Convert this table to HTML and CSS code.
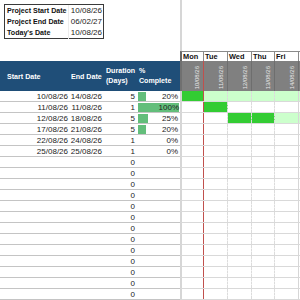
FILE: index.html
```html
<!DOCTYPE html>
<html>
<head>
<meta charset="utf-8">
<link rel="stylesheet" href="styles.css">
</head>
<body>
<div class="sheet">
  <div class="left">
    <div class="top">
      <div class="info">
        <div class="info-row"><span class="lbl">Project Start Date</span><span class="val">10/08/26</span></div>
        <div class="info-row"><span class="lbl">Project End Date</span><span class="val">06/02/27</span></div>
        <div class="info-row"><span class="lbl">Today's Date</span><span class="val">10/08/26</span></div>
      </div>
    </div>
    <div class="thead">
      <div class="th th-start">Start Date</div>
      <div class="th th-end">End Date</div>
      <div class="th th-dur">Duration<br>(Days)</div>
      <div class="th th-pct">%<br>Complete</div>
    </div>
    <div class="trow"><span class="td">10/08/26</span><span class="td">14/08/26</span><span class="td dur">5</span><span class="td pct"><i class="bar" style="width:8px"></i><b>20%</b></span></div>
    <div class="trow"><span class="td">11/08/26</span><span class="td">11/08/26</span><span class="td dur">1</span><span class="td pct"><i class="bar" style="width:41px"></i><b>100%</b></span></div>
    <div class="trow"><span class="td">12/08/26</span><span class="td">18/08/26</span><span class="td dur">5</span><span class="td pct"><i class="bar" style="width:10px"></i><b>25%</b></span></div>
    <div class="trow"><span class="td">17/08/26</span><span class="td">21/08/26</span><span class="td dur">5</span><span class="td pct"><i class="bar" style="width:8px"></i><b>20%</b></span></div>
    <div class="trow"><span class="td">22/08/26</span><span class="td">24/08/26</span><span class="td dur">1</span><span class="td pct"><b>0%</b></span></div>
    <div class="trow"><span class="td">25/08/26</span><span class="td">25/08/26</span><span class="td dur">1</span><span class="td pct"><b>0%</b></span></div>
    <div class="trow"><span class="td"></span><span class="td"></span><span class="td dur">0</span><span class="td pct"></span></div>
    <div class="trow"><span class="td"></span><span class="td"></span><span class="td dur">0</span><span class="td pct"></span></div>
    <div class="trow"><span class="td"></span><span class="td"></span><span class="td dur">0</span><span class="td pct"></span></div>
    <div class="trow"><span class="td"></span><span class="td"></span><span class="td dur">0</span><span class="td pct"></span></div>
    <div class="trow"><span class="td"></span><span class="td"></span><span class="td dur">0</span><span class="td pct"></span></div>
    <div class="trow"><span class="td"></span><span class="td"></span><span class="td dur">0</span><span class="td pct"></span></div>
    <div class="trow"><span class="td"></span><span class="td"></span><span class="td dur">0</span><span class="td pct"></span></div>
    <div class="trow"><span class="td"></span><span class="td"></span><span class="td dur">0</span><span class="td pct"></span></div>
    <div class="trow"><span class="td"></span><span class="td"></span><span class="td dur">0</span><span class="td pct"></span></div>
    <div class="trow"><span class="td"></span><span class="td"></span><span class="td dur">0</span><span class="td pct"></span></div>
    <div class="trow"><span class="td"></span><span class="td"></span><span class="td dur">0</span><span class="td pct"></span></div>
    <div class="trow"><span class="td"></span><span class="td"></span><span class="td dur">0</span><span class="td pct"></span></div>
    <div class="trow"><span class="td"></span><span class="td"></span><span class="td dur">0</span><span class="td pct"></span></div>
  </div>
  <div class="right">
    <div class="r-top"></div>
    <div class="days">
      <div class="day c1">Mon</div><div class="day">Tue</div><div class="day">Wed</div><div class="day">Thu</div><div class="day">Fri</div><div class="day"></div>
    </div>
    <div class="dates">
      <div class="date c1"><span>10/08/26</span></div>
      <div class="date"><span>11/08/26</span></div>
      <div class="date"><span>12/08/26</span></div>
      <div class="date"><span>13/08/26</span></div>
      <div class="date"><span>14/08/26</span></div>
      <div class="date"></div>
    </div>
    <div class="grow"><i class="g c1 done"></i><i class="g c2 plan"></i><i class="g c3 plan"></i><i class="g c4 plan"></i><i class="g c5 plan"></i><i class="g c6 plan"></i></div>
    <div class="grow"><i class="g c1"></i><i class="g c2 done"></i><i class="g c3"></i><i class="g c4"></i><i class="g c5"></i><i class="g c6"></i></div>
    <div class="grow"><i class="g c1"></i><i class="g c2"></i><i class="g c3 done"></i><i class="g c4 done"></i><i class="g c5 plan"></i><i class="g c6 plan"></i></div>
    <div class="grow"><i class="g c1"></i><i class="g c2"></i><i class="g c3"></i><i class="g c4"></i><i class="g c5"></i><i class="g c6"></i></div>
    <div class="grow"><i class="g c1"></i><i class="g c2"></i><i class="g c3"></i><i class="g c4"></i><i class="g c5"></i><i class="g c6"></i></div>
    <div class="grow"><i class="g c1"></i><i class="g c2"></i><i class="g c3"></i><i class="g c4"></i><i class="g c5"></i><i class="g c6"></i></div>
    <div class="grow"><i class="g c1"></i><i class="g c2"></i><i class="g c3"></i><i class="g c4"></i><i class="g c5"></i><i class="g c6"></i></div>
    <div class="grow"><i class="g c1"></i><i class="g c2"></i><i class="g c3"></i><i class="g c4"></i><i class="g c5"></i><i class="g c6"></i></div>
    <div class="grow"><i class="g c1"></i><i class="g c2"></i><i class="g c3"></i><i class="g c4"></i><i class="g c5"></i><i class="g c6"></i></div>
    <div class="grow"><i class="g c1"></i><i class="g c2"></i><i class="g c3"></i><i class="g c4"></i><i class="g c5"></i><i class="g c6"></i></div>
    <div class="grow"><i class="g c1"></i><i class="g c2"></i><i class="g c3"></i><i class="g c4"></i><i class="g c5"></i><i class="g c6"></i></div>
    <div class="grow"><i class="g c1"></i><i class="g c2"></i><i class="g c3"></i><i class="g c4"></i><i class="g c5"></i><i class="g c6"></i></div>
    <div class="grow"><i class="g c1"></i><i class="g c2"></i><i class="g c3"></i><i class="g c4"></i><i class="g c5"></i><i class="g c6"></i></div>
    <div class="grow"><i class="g c1"></i><i class="g c2"></i><i class="g c3"></i><i class="g c4"></i><i class="g c5"></i><i class="g c6"></i></div>
    <div class="grow"><i class="g c1"></i><i class="g c2"></i><i class="g c3"></i><i class="g c4"></i><i class="g c5"></i><i class="g c6"></i></div>
    <div class="grow"><i class="g c1"></i><i class="g c2"></i><i class="g c3"></i><i class="g c4"></i><i class="g c5"></i><i class="g c6"></i></div>
    <div class="grow"><i class="g c1"></i><i class="g c2"></i><i class="g c3"></i><i class="g c4"></i><i class="g c5"></i><i class="g c6"></i></div>
    <div class="grow"><i class="g c1"></i><i class="g c2"></i><i class="g c3"></i><i class="g c4"></i><i class="g c5"></i><i class="g c6"></i></div>
    <div class="grow"><i class="g c1"></i><i class="g c2"></i><i class="g c3"></i><i class="g c4"></i><i class="g c5"></i><i class="g c6"></i></div>
  </div>
</div>
</body>
</html>
```
FILE: styles.css
```css
* { box-sizing: border-box; }
html, body { margin: 0; padding: 0; background: #fff; }
body {
  font-family: "Liberation Sans", Arial, sans-serif;
  color: #222;
  overflow: hidden;
}
.sheet {
  display: flex;
  width: 300px;
  height: 300px;
  overflow: hidden;
}
.left {
  width: 180px;
  flex: none;
  display: flex;
  flex-direction: column;
}
.top {
  height: 61px;
  padding: 4px 0 0 4px;
}
.info {
  width: 100px;
  border: 1px solid #3a3a3a;
  display: flex;
  flex-direction: column;
}
.info-row {
  height: 11px;
  display: grid;
  grid-template-columns: 63px 35px;
  line-height: 12px;
}
.lbl {
  font-weight: bold;
  font-size: 7.1px;
  padding-left: 2px;
  color: #111;
  white-space: nowrap;
}
.val {
  font-size: 8px;
  text-align: right;
  padding-right: 1px;
  border-left: 1px solid #ececec;
}
.thead {
  height: 30px;
  background: #1f4e78;
  display: grid;
  grid-template-columns: 69px 34px 34px 43px;
}
.th {
  color: #fff;
  font-weight: bold;
  font-size: 7.1px;
  line-height: 10px;
  display: flex;
  align-items: center;
  white-space: nowrap;
}
.th-start { padding-left: 7px; padding-top: 1px; }
.th-end { padding-left: 2px; padding-top: 1px; }
.th-dur { padding-left: 3px; }
.th-pct { padding-left: 2px; }
.trow {
  height: 11px;
  flex: none;
  display: grid;
  grid-template-columns: 69px 34px 34px 43px;
  border-bottom: 1px solid #c4c4c4;
}
.td {
  font-size: 8px;
  line-height: 11px;
  text-align: right;
  padding-right: 1px;
  white-space: nowrap;
}
.td.dur { padding-right: 2px; }
.td.pct {
  display: grid;
  padding-right: 2px;
}
.td.pct > * { grid-area: 1 / 1; }
.bar {
  display: block;
  height: 9px;
  margin: 1px 0 0 1px;
  background: #63be7b;
  justify-self: start;
}
.td.pct b {
  font-weight: normal;
  position: relative;
}
.right {
  width: 120px;
  flex: none;
  display: flex;
  flex-direction: column;
}
.r-top {
  height: 51px;
  flex: none;
  border-left: 2px solid #d6d6d6;
}
.days, .dates, .grow {
  display: grid;
  grid-template-columns: 22px 24px 24px 23px 24px 1px;
  flex: none;
}
.days {
  height: 10px;
  border-top: 1px solid #8a8a8a;
  border-left: 2px solid #6a6a6a;
}
.day {
  font-size: 7.4px;
  font-weight: bold;
  line-height: 9px;
  padding-left: 1px;
  color: #111;
  border-right: 1px solid #8a8a8a;
}
.dates {
  height: 30px;
  background: #808080;
  border-left: 2px solid #707070;
}
.date {
  display: flex;
  justify-content: flex-end;
  align-items: flex-end;
  padding: 0 2px 2px 0;
  border-right: 1px solid #6e6e6e;
}
.date.c1 { border-right-color: #c0504d; }
.date span {
  writing-mode: vertical-rl;
  transform: rotate(180deg);
  font-size: 6px;
  line-height: 7px;
  color: #e8e8e8;
  white-space: nowrap;
}
.grow {
  height: 11px;
  border-left: 2px solid #d6d6d6;
  border-bottom: 1px solid #d9d9d9;
}
.g { display: block; }
.g.c1 { border-right: 1px solid #c0504d; }
.g.c2, .g.c3, .g.c4 { border-right: 1px dashed #dcdcdc; }
.g.c5 { border-right: 1px solid #d6d6d6; }
.g.done { background: #33cc33; }
.g.plan { background: #ccffcc; }
```
